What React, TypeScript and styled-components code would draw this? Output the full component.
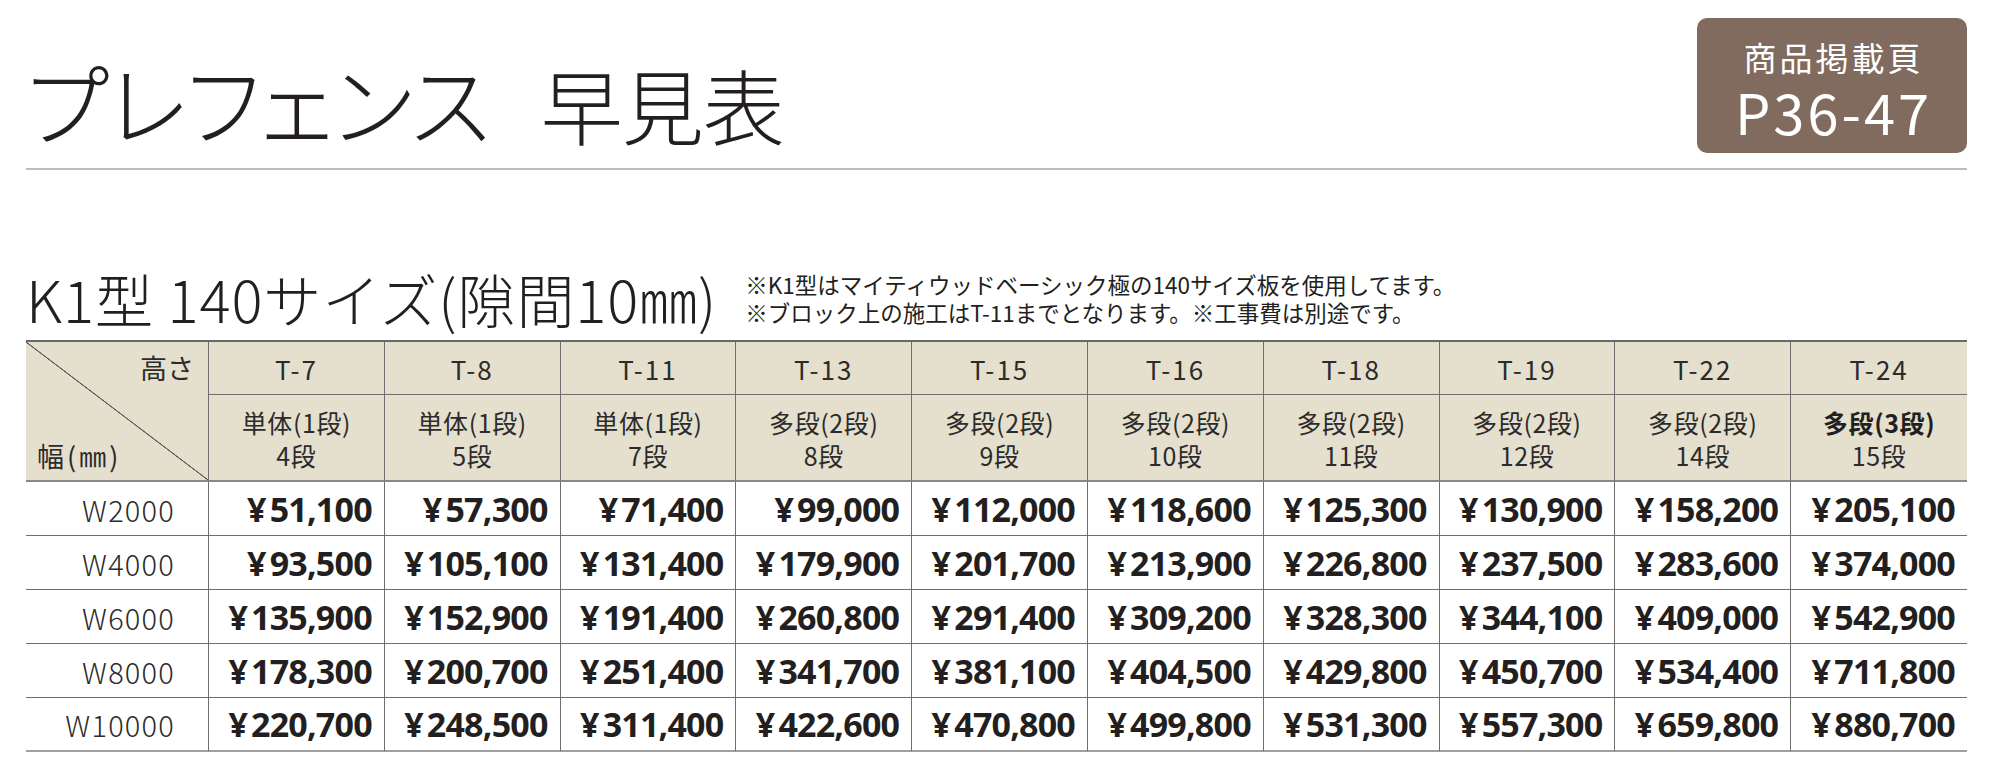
import React from "react";
import styled, { createGlobalStyle } from "styled-components";

const GlobalStyle = createGlobalStyle`
  html, body { margin: 0; padding: 0; background: #ffffff; }
  body { font-family: "Noto Sans CJK JP", "Noto Sans", sans-serif; color: #231f20; }
  * { box-sizing: border-box; }
`;

const JP = `"Noto Sans CJK JP", "Noto Sans", sans-serif`;
const PRICE = `"Open Sans", "Noto Sans", "Liberation Sans", sans-serif`;

const Page = styled.div`
  width: 1998px;
  padding: 18px 31px 0 26px;
`;

const Header = styled.header`
  display: flex;
  justify-content: space-between;
  align-items: flex-end;
  padding-bottom: 15px;
  border-bottom: 2px solid #bdbdbd;
`;

const Title = styled.h1`
  margin: 0 0 8px 0;
  display: flex;
  align-items: baseline;
  gap: 50px;
  font-family: ${JP};
  font-weight: 300;
  font-size: 89px;
  line-height: 1;
  color: #231f20;
  font-feature-settings: "palt" 1;
`;

const TitleKanji = styled.span`
  font-size: 82px;
  letter-spacing: -1px;
`;

const Badge = styled.div`
  width: 270px;
  height: 135px;
  border-radius: 10px;
  background: #806b5e;
  color: #ffffff;
  display: flex;
  flex-direction: column;
  align-items: center;
  padding-top: 19px;
  font-family: ${JP};
`;

const BadgeLabel = styled.div`
  font-size: 33px;
  line-height: 40px;
  letter-spacing: 3px;
  padding-left: 3px;
`;

const BadgePages = styled.div`
  margin-top: 10px;
  font-size: 56px;
  line-height: 48px;
  letter-spacing: 3px;
  padding-left: 3px;
`;

const SubHead = styled.div`
  margin-top: 98px;
  height: 60px;
  display: flex;
  align-items: center;
  gap: 28px;
`;

const SubTitle = styled.h2`
  margin: 0;
  font-family: ${JP};
  font-weight: 300;
  font-size: 58px;
  line-height: 1;
  color: #231f20;
  letter-spacing: 0.9px;
`;

const Notes = styled.div`
  font-family: ${JP};
  font-size: 22.5px;
  line-height: 28px;
  color: #231f20;
`;

const NoteLine = styled.p`
  margin: 0;
`;

const Table = styled.div`
  margin-top: 12px;
  width: 1941px;
  display: grid;
  grid-template-columns: 183px repeat(10, 1fr);
  grid-template-rows: 53px 87px repeat(5, 54px);
  border-top: 2px solid #6a6a6a;
`;

const Corner = styled.div`
  grid-row: 1 / span 2;
  background-color: #e5dfce;
  background-image: linear-gradient(
    to top right,
    transparent calc(50% - 0.8px),
    #5a5a5a calc(50% - 0.3px),
    #5a5a5a calc(50% + 0.3px),
    transparent calc(50% + 0.8px)
  );
  border-right: 1px solid #6e6e6e;
  border-bottom: 2px solid #8a8a8a;
  display: flex;
  flex-direction: column;
  justify-content: space-between;
  padding: 10px 14px 8px 11px;
  font-family: ${JP};
  font-size: 27px;
  line-height: 32px;
  color: #2b2b2b;
`;

const CornerTop = styled.span`
  align-self: flex-end;
`;

const CornerBottom = styled.span`
  align-self: flex-start;
  letter-spacing: 3px;
`;

const HeadCell = styled.div<{ $row: 1 | 2; $last?: boolean }>`
  background: #e5dfce;
  border-right: ${(p) => (p.$last ? "none" : "1px solid #6e6e6e")};
  border-bottom: ${(p) => (p.$row === 2 ? "2px solid #8a8a8a" : "1px solid #6e6e6e")};
  display: flex;
  flex-direction: column;
  align-items: center;
  justify-content: center;
  font-family: ${JP};
  font-weight: 400;
  font-size: ${(p) => (p.$row === 1 ? "26px" : "25px")};
  letter-spacing: ${(p) => (p.$row === 1 ? "2px" : "0.6px")};
  line-height: 33px;
  color: #2b2b2b;
  padding-top: ${(p) => (p.$row === 2 ? "2px" : "0")};
`;

const Strong = styled.span`
  font-weight: 700;
  color: #231f20;
`;

const WidthCell = styled.div<{ $last?: boolean }>`
  border-right: 1px solid #6e6e6e;
  border-bottom: ${(p) => (p.$last ? "2px solid #a0a0a0" : "1px solid #6e6e6e")};
  display: flex;
  align-items: center;
  justify-content: flex-end;
  padding-right: 33px;
  font-family: ${JP};
  font-weight: 300;
  font-size: 29px;
  letter-spacing: 1.2px;
  color: #2b2b2b;
`;

const PriceCell = styled.div<{ $last?: boolean; $lastCol?: boolean }>`
  border-right: ${(p) => (p.$lastCol ? "none" : "1px solid #6e6e6e")};
  border-bottom: ${(p) => (p.$last ? "2px solid #a0a0a0" : "1px solid #6e6e6e")};
  display: flex;
  align-items: center;
  justify-content: flex-end;
  padding-right: 12px;
  font-family: ${PRICE};
  font-weight: 700;
  font-size: 34px;
  letter-spacing: -0.8px;
  color: #231f20;
`;

const Yen = styled.span`
  margin-right: 4px;
`;

const heights = ["T-7", "T-8", "T-11", "T-13", "T-15", "T-16", "T-18", "T-19", "T-22", "T-24"];
const kinds: { type: string; count: string; bold?: boolean }[] = [
  { type: "単体(1段)", count: "4段" },
  { type: "単体(1段)", count: "5段" },
  { type: "単体(1段)", count: "7段" },
  { type: "多段(2段)", count: "8段" },
  { type: "多段(2段)", count: "9段" },
  { type: "多段(2段)", count: "10段" },
  { type: "多段(2段)", count: "11段" },
  { type: "多段(2段)", count: "12段" },
  { type: "多段(2段)", count: "14段" },
  { type: "多段(3段)", count: "15段", bold: true },
];

const rows: { width: string; prices: string[] }[] = [
  { width: "W2000", prices: ["51,100", "57,300", "71,400", "99,000", "112,000", "118,600", "125,300", "130,900", "158,200", "205,100"] },
  { width: "W4000", prices: ["93,500", "105,100", "131,400", "179,900", "201,700", "213,900", "226,800", "237,500", "283,600", "374,000"] },
  { width: "W6000", prices: ["135,900", "152,900", "191,400", "260,800", "291,400", "309,200", "328,300", "344,100", "409,000", "542,900"] },
  { width: "W8000", prices: ["178,300", "200,700", "251,400", "341,700", "381,100", "404,500", "429,800", "450,700", "534,400", "711,800"] },
  { width: "W10000", prices: ["220,700", "248,500", "311,400", "422,600", "470,800", "499,800", "531,300", "557,300", "659,800", "880,700"] },
];

export default function App() {
  return (
    <>
      <GlobalStyle />
      <Page>
        <Header>
          <Title>
            <span>プレフェンス</span>
            <TitleKanji>早見表</TitleKanji>
          </Title>
          <Badge>
            <BadgeLabel>商品掲載頁</BadgeLabel>
            <BadgePages>P36-47</BadgePages>
          </Badge>
        </Header>

        <SubHead>
          <SubTitle>K1型 140サイズ(隙間10㎜)</SubTitle>
          <Notes>
            <NoteLine>※K1型はマイティウッドベーシック極の140サイズ板を使用してます。</NoteLine>
            <NoteLine>※ブロック上の施工はT-11までとなります。※工事費は別途です。</NoteLine>
          </Notes>
        </SubHead>

        <Table>
          <Corner>
            <CornerTop>高さ</CornerTop>
            <CornerBottom>幅(㎜)</CornerBottom>
          </Corner>
          {heights.map((h, i) => (
            <HeadCell key={h} $row={1} $last={i === heights.length - 1}>
              {h}
            </HeadCell>
          ))}
          {kinds.map((k, i) => (
            <HeadCell key={i} $row={2} $last={i === kinds.length - 1}>
              {k.bold ? <Strong>{k.type}</Strong> : <span>{k.type}</span>}
              <span>{k.count}</span>
            </HeadCell>
          ))}
          {rows.map((r, ri) => {
            const last = ri === rows.length - 1;
            return (
              <React.Fragment key={r.width}>
                <WidthCell $last={last}>{r.width}</WidthCell>
                {r.prices.map((p, ci) => (
                  <PriceCell key={ci} $last={last} $lastCol={ci === r.prices.length - 1}>
                    <Yen>¥</Yen>
                    {p}
                  </PriceCell>
                ))}
              </React.Fragment>
            );
          })}
        </Table>
      </Page>
    </>
  );
}
